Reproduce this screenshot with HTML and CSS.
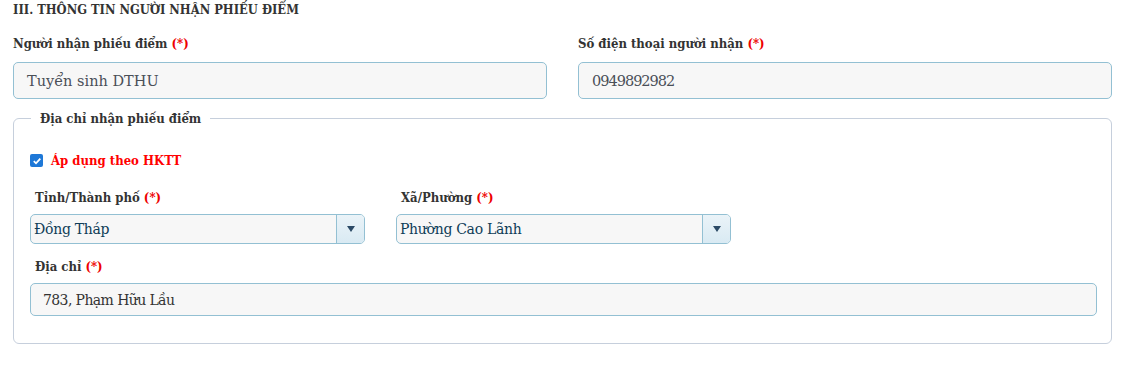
FILE: index.html
```html
<!DOCTYPE html>
<html lang="vi">
<head>
<meta charset="utf-8">
<link rel="stylesheet" href="styles.css">
</head>
<body>
<div class="page">
  <h3 class="section-title">III. THÔNG TIN NGƯỜI NHẬN PHIẾU ĐIỂM</h3>
  <div class="row">
    <div class="field">
      <label class="label">Người nhận phiếu điểm <span class="req">(*)</span></label>
      <div class="input big">Tuyển sinh DTHU</div>
    </div>
    <div class="field">
      <label class="label">Số điện thoại người nhận <span class="req">(*)</span></label>
      <div class="input big phone">0949892982</div>
    </div>
  </div>
  <fieldset class="box">
    <legend class="legend">Địa chỉ nhận phiếu điểm</legend>
    <div class="check-row">
      <span class="checkbox"><svg width="10" height="10" viewBox="0 0 10 10"><path d="M1.8 5.2 L4 7.3 L8.3 2.6" fill="none" stroke="#fff" stroke-width="1.8"/></svg></span>
      <span class="check-label">Áp dụng theo HKTT</span>
    </div>
    <div class="select-row">
      <div class="sfield">
        <label class="label sub">Tỉnh/Thành phố <span class="req">(*)</span></label>
        <div class="select"><span class="stext">Đồng Tháp</span><span class="arrow"><svg width="8" height="6" viewBox="0 0 8 6"><path d="M0 0 H8 L4 6 Z" fill="#2b4a66"/></svg></span></div>
      </div>
      <div class="sfield">
        <label class="label sub">Xã/Phường <span class="req">(*)</span></label>
        <div class="select"><span class="stext">Phường Cao Lãnh</span><span class="arrow"><svg width="8" height="6" viewBox="0 0 8 6"><path d="M0 0 H8 L4 6 Z" fill="#2b4a66"/></svg></span></div>
      </div>
    </div>
    <label class="label sub addr-label">Địa chỉ <span class="req">(*)</span></label>
    <div class="input addr">783, Phạm Hữu Lầu</div>
  </fieldset>
</div>
</body>
</html>
```
FILE: styles.css
```css
* { box-sizing: border-box; }
html, body { margin: 0; padding: 0; background: #fff; }
body { font-family: "DejaVu Serif", serif; color: #333; }
.page { padding: 2px 22px 0 13px; width: 1134px; }
.section-title {
  margin: 0; font-size: 12.8px; font-weight: bold; color: #333; font-stretch: condensed;
  height: 20px; line-height: 16px;
}
.row { display: flex; gap: 31px; margin-top: 14px; }
.field { flex: 1; display: flex; flex-direction: column; }
.label { font-size: 13px; font-weight: bold; color: #333; line-height: 16px; font-stretch: condensed; }
.req { color: #e00; }
.input {
  background: #f7f7f7; border: 1px solid #93c0d3; border-radius: 5px;
  color: #444; display: flex; align-items: center;
}
.big { height: 37px; margin-top: 10px; padding-left: 13px; font-size: 14.5px; color: #4a4f57; }
.phone { letter-spacing: -1px; }
.box {
  margin: 12px 0 0 0; border: 1px solid #c6cfdc; border-radius: 6px;
  padding: 16px 14px 25px 16px; height: 233px;
}
.legend { padding: 0 9px; margin-left: 1px; font-size: 13px; font-weight: bold; color: #333; font-stretch: condensed; }
.check-row { display: flex; align-items: center; gap: 8px; margin-top: 11px; }
.checkbox { width: 13px; height: 13px; border-radius: 2px; background: #1e78d7; display: flex; align-items: center; justify-content: center; }
.check-label { color: #f00; font-weight: bold; font-size: 13px; font-stretch: condensed; }
.select-row { display: flex; gap: 31px; margin-top: 22px; }
.sfield { width: 335px; display: flex; flex-direction: column; }
.sub { padding-left: 5px; }
.select {
  margin-top: 8px; height: 30px; background: #f7f7f7; border: 1px solid #93c0d3; border-radius: 5px;
  display: flex; align-items: center; overflow: hidden;
}
.stext { flex: 1; padding-left: 3px; font-size: 14px; color: #0f3d58; letter-spacing: -0.3px; }
.arrow { width: 28px; height: 100%; border-left: 1px solid #93c0d3; background: linear-gradient(#eaf3f8, #d9eaf3); display: flex; align-items: center; justify-content: center; }
.addr-label { display: block; margin-top: 15px; }
.addr { margin-top: 8px; height: 33px; padding-left: 12px; font-size: 14px; color: #333; letter-spacing: -0.6px; }
```
